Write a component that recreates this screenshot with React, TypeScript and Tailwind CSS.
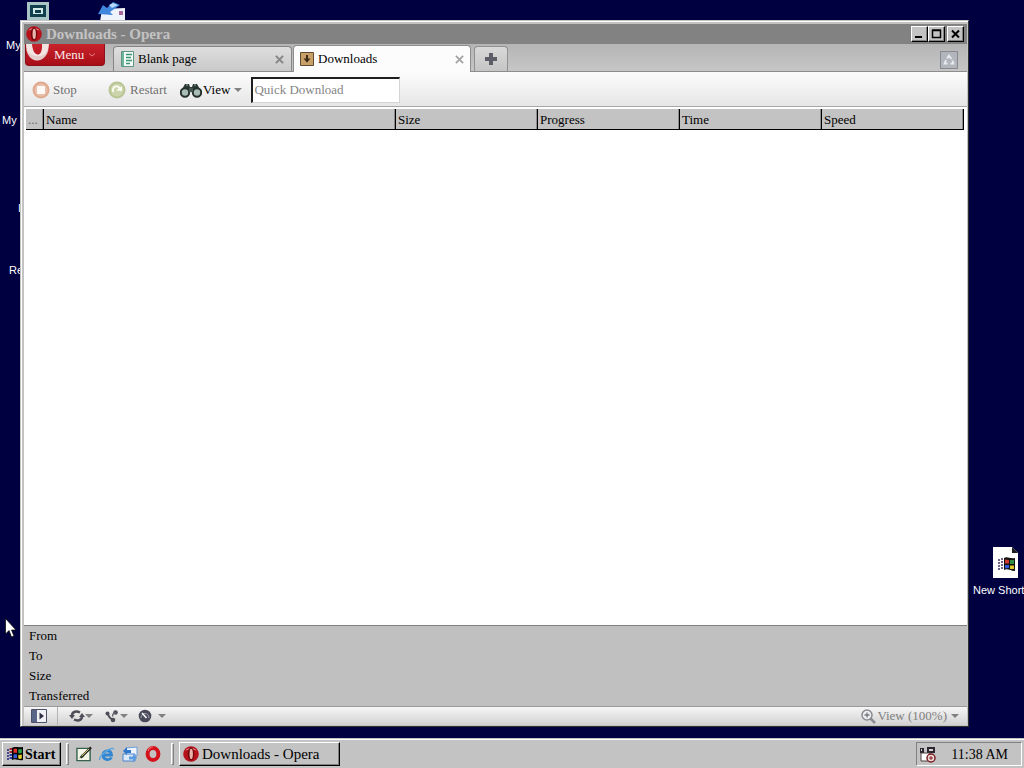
import React from 'react';

type IconProps = { className?: string };

const OperaIcon = ({ className = '' }: IconProps) => (
  <svg viewBox="0 0 16 16" className={className} aria-hidden="true">
    <ellipse cx="8" cy="8" rx="7.8" ry="7.8" fill="#b5121b" />
    <path d="M2 5C4 1 12 1 14 5C12 3 4 3 2 5Z" fill="#e8848a" />
    <ellipse cx="8" cy="8" rx="3.2" ry="6.4" fill="#6d050b" />
    <ellipse cx="8.2" cy="8" rx="1.7" ry="5.2" fill="#e9b4ab" />
  </svg>
);

const OperaRing = ({ className = '' }: IconProps) => (
  <svg viewBox="0 0 16 16" className={className} aria-hidden="true">
    <ellipse cx="8" cy="8" rx="5.4" ry="5.9" fill="none" stroke="#d3121b" strokeWidth="4" />
    <path d="M3 5C4 2 6 1 8 1" fill="none" stroke="#ef6a6a" strokeWidth="1.2" />
  </svg>
);

const WindowsFlag = ({ className = '' }: IconProps) => (
  <svg viewBox="0 0 18 16" className={className} aria-hidden="true">
    <path d="M6 2C9 0 11 2 17 1V14C12 15 10 12 6 14Z" fill="#000" />
    <path d="M7.5 3C9 2 10 2.5 11 3V7C10 6.5 9 6.5 7.5 7Z" fill="#e03028" />
    <path d="M12.3 3.3C13.5 3.5 14.5 3 15.8 3V7C14.5 7.5 13.5 7.5 12.3 7.3Z" fill="#2fa04a" />
    <path d="M7.5 8.5C9 8 10 8 11 8.5V12.3C10 11.8 9 12 7.5 12.5Z" fill="#3558d8" />
    <path d="M12.3 8.8C13.5 9 14.5 8.8 15.8 8.5V12.5C14.5 13 13.5 13 12.3 12.6Z" fill="#e8cf30" />
    <path d="M1 4h2M1 7h2M1 10h2M1 13h2" stroke="#26267a" strokeWidth="1.6" />
    <path d="M3.500 3H6M3.500 6H6" stroke="#a02830" strokeWidth="2" />
    <path d="M3.500 9H6M3.500 12H6" stroke="#2c3fa8" strokeWidth="2" />
  </svg>
);

const Caret = ({ className = '' }: IconProps) => (
  <svg viewBox="0 0 8 4" className={`h-1 w-2 shrink-0 ${className}`} aria-hidden="true">
    <path d="M0 0H8L4 4Z" fill="currentColor" />
  </svg>
);

const CloseIcon = ({ className = '' }: IconProps) => (
  <svg viewBox="0 0 10 10" className={className} aria-hidden="true">
    <path d="M1 1L9 9M9 1L1 9" stroke="currentColor" strokeWidth="2.2" />
  </svg>
);

const BinocularsIcon = () => (
  <svg viewBox="0 0 22 16" className="h-4 w-[22px]" aria-hidden="true">
    <path d="M5 2h4l1 3h2l1-3h4l4 7H1Z" fill="#2c3a35" />
    <path d="M6 3h2M14 3h2" stroke="#93a8a0" />
    <circle cx="5" cy="10.5" r="4.2" fill="#a9bcb5" stroke="#24312c" strokeWidth="2" />
    <circle cx="17" cy="10.5" r="4.2" fill="#a9bcb5" stroke="#24312c" strokeWidth="2" />
    <path d="M9 6h4v4h-4Z" fill="#46574f" />
  </svg>
);

const WINDOW_BUTTON =
  'flex h-4 w-[17px] items-center justify-center border border-t-white border-r-black border-b-black border-l-white bg-[#c3c3c3] shadow-[inset_-1px_-1px_0_#808080]';

function TitleBar() {
  return (
    <header className="flex h-5 items-center bg-[#828282] pr-[3px] pl-[2px]">
      <OperaIcon className="h-4 w-4" />
      <h1 className="ml-1 flex-1 text-[15px] leading-5 font-bold text-[#c3c3c3]">Downloads - Opera</h1>
      <button type="button" aria-label="Minimize" className={WINDOW_BUTTON}>
        <svg viewBox="0 0 11 10" className="h-[10px] w-[11px]">
          <path d="M1 8h7" stroke="#000" strokeWidth="2" />
        </svg>
      </button>
      <button type="button" aria-label="Maximize" className={WINDOW_BUTTON}>
        <svg viewBox="0 0 11 10" className="h-[10px] w-[11px]">
          <path d="M1.5 1.5h8v7h-8ZM1 1h9" fill="none" stroke="#000" strokeWidth="1.5" />
        </svg>
      </button>
      <button type="button" aria-label="Close" className={`ml-[2px] ${WINDOW_BUTTON}`}>
        <svg viewBox="0 0 11 10" className="h-[10px] w-[11px]">
          <path d="M2 1.5L9 8.5M9 1.5L2 8.5" stroke="#000" strokeWidth="2" />
        </svg>
      </button>
    </header>
  );
}

function TabBar() {
  return (
    <nav className="flex h-7 items-start border-b border-[#8d8d8d] bg-gradient-to-b from-[#b5b5b5] to-[#c6c6c6] pl-px">
      <button
        type="button"
        className="flex h-[22px] w-20 items-center rounded-b-sm border border-t-0 border-[#8c1118] bg-gradient-to-b from-[#c9222b] to-[#a80d17] text-[13px] text-[#fbe9e9]"
      >
        <svg viewBox="0 0 24 20" className="h-5 w-6 self-start" aria-hidden="true">
          <path d="M0 0C0 22 22 22 23 0H16C17 14 7 14 6 0Z" fill="#f3e3e1" />
          <path d="M0 4C2 20 21 20 23 4C20 15 4 15 0 4Z" fill="#d9c0be" opacity="0.6" />
        </svg>
        <span className="ml-1">Menu</span>
        <svg viewBox="0 0 8 4" className="ml-1 h-1 w-2" aria-hidden="true">
          <path d="M1 .5L4 3L7 .5" fill="none" stroke="#e88086" />
        </svg>
      </button>

      <div className="mt-[2px] ml-2 flex h-[25px] w-[179px] items-center rounded-t border border-b-0 border-[#858585] bg-gradient-to-b from-[#dedede] to-[#c9c9c9] px-[7px]">
        <button type="button" className="flex flex-1 items-center text-left text-[13px]">
          <svg viewBox="0 0 13 16" className="mr-1 h-4 w-[13px]" aria-hidden="true">
            <path d="M.5 .5h12v15H.5Z" fill="#f2fbf6" stroke="#5d9482" />
            <path d="M1 1h2v14H1Z" fill="#6fb49d" />
            <path d="M5 3.5h6M5 6.5h5M5 9.5h6M5 12.5h4" stroke="#3f9478" strokeWidth="1.5" />
          </svg>
          Blank page
        </button>
        <button type="button" aria-label="Close Blank page" className="text-[#858585]">
          <CloseIcon className="h-[9px] w-[9px]" />
        </button>
      </div>

      <div className="mt-px ml-px flex h-[27px] w-[178px] items-center rounded-t border border-b-0 border-[#8d8d8d] bg-[#fcfcfc] px-[6px]">
        <button type="button" className="flex flex-1 items-center text-left text-[13px]">
          <svg viewBox="0 0 14 14" className="mr-1 h-[14px] w-[14px]" aria-hidden="true">
            <path d="M.5 .5h13v13H.5Z" fill="#c9a067" stroke="#5e4b32" />
            <path d="M7 3v7" stroke="#3c2b18" strokeWidth="2" />
            <path d="M3.5 6.5h7L7 10.500Z" fill="#3c2b18" />
          </svg>
          Downloads
        </button>
        <button type="button" aria-label="Close Downloads" className="text-[#a6a6a6]">
          <CloseIcon className="h-[9px] w-[9px]" />
        </button>
      </div>

      <button
        type="button"
        aria-label="New tab"
        className="mt-[2px] ml-[3px] flex h-[25px] w-[34px] items-center justify-center rounded-t border border-b-0 border-[#919191] bg-gradient-to-b from-[#d9d9d9] to-[#c5c5c5]"
      >
        <svg viewBox="0 0 12 12" className="h-3 w-3" aria-hidden="true">
          <path d="M6 0v12M0 6h12" stroke="#5d5d68" strokeWidth="4" />
        </svg>
      </button>

      <button
        type="button"
        aria-label="Closed tabs"
        className="mt-[7px] mr-[9px] ml-auto flex h-[18px] w-[18px] items-center justify-center border border-[#858a91] bg-[#b2b6bc]"
      >
        <svg viewBox="0 0 14 14" className="h-[14px] w-[14px]" aria-hidden="true">
          <path d="M5 5.5L7 2.5L9.5 6M10.500 7.500L11.500 10.500H8.500M5.500 10.500H2.500L4 7" fill="none" stroke="#e7eaee" strokeWidth="1.800" />
        </svg>
      </button>
    </nav>
  );
}

function Toolbar() {
  return (
    <div className="flex h-[35px] items-center border-b border-[#a8a8a8] bg-gradient-to-b from-[#fcfcfc] to-[#e6e6e6] pt-px pl-2 text-[13px] text-[#717171]">
      <button type="button" className="flex w-[76px] items-center">
        <svg viewBox="0 0 18 18" className="mr-[3px] h-[18px] w-[18px]" aria-hidden="true">
          <circle cx="9" cy="9" r="8.5" fill="#dfa98f" />
          <circle cx="9" cy="9" r="6.5" fill="#e9bfaa" />
          <rect x="5" y="5" width="8" height="8" rx="1" fill="#fff9f5" />
        </svg>
        Stop
      </button>
      <button type="button" className="flex w-[72px] items-center">
        <svg viewBox="0 0 18 18" className="mr-1 h-[18px] w-[18px]" aria-hidden="true">
          <circle cx="9" cy="9" r="8.5" fill="#b9c495" />
          <circle cx="9" cy="9" r="6.5" fill="#cbd5ab" />
          <path d="M5 11C4 4 11 4 12 8" fill="none" stroke="#fbfdf4" strokeWidth="2" />
          <path d="M8 9.500L14 10V5Z" fill="#fbfdf4" />
        </svg>
        Restart
      </button>
      <button type="button" className="flex items-center text-black">
        <BinocularsIcon />
        <span className="mr-1 ml-px">View</span>
        <Caret className="text-[#828282]" />
      </button>
      <input
        type="text"
        aria-label="Quick Download"
        placeholder="Quick Download"
        className="ml-[9px] h-[26px] w-[149px] border-t-2 border-r border-b border-l-2 border-t-[#1e1e1e] border-r-[#d4d4d4] border-b-[#d4d4d4] border-l-[#1e1e1e] bg-white px-px text-[13px] outline-none placeholder:text-[#858585]"
      />
    </div>
  );
}

// Name takes whatever the fixed columns leave
const COLUMNS = [
  { label: '...', width: 'w-[18px] text-[#6a6a6a]' },
  { label: 'Name', width: '' },
  { label: 'Size', width: 'w-[142px]' },
  { label: 'Progress', width: 'w-[142px]' },
  { label: 'Time', width: 'w-[142px]' },
  { label: 'Speed', width: 'w-[142px]' },
];

function TransferList() {
  return (
    <main className="flex-1 bg-white pt-[2px] pr-[3px] pl-[2px]">
      <table className="w-full table-fixed border-separate border-spacing-0 text-[13px]">
        <thead>
          <tr className="bg-[#c3c3c3]">
            {COLUMNS.map((column) => (
              <th
                key={column.label}
                scope="col"
                className={`overflow-hidden border-r border-b border-r-black border-b-black p-0 pt-px pl-[2px] text-left leading-[19px] font-normal shadow-[inset_-1px_0_0_#8c8c8c] ${column.width}`}
              >
                {column.label}
              </th>
            ))}
          </tr>
        </thead>
        <tbody />
      </table>
    </main>
  );
}

const DETAILS = ['From', 'To', 'Size', 'Transferred'];

function StatusBar() {
  return (
    <footer className="flex h-[19px] items-center border-t border-[#9a9a9a] bg-gradient-to-b from-[#f6f6f6] to-[#d2d2d2] text-[#808080]">
      <button type="button" aria-label="Panels" className="flex h-full w-[34px] items-center border-r border-[#b4b4b4] pl-[7px]">
        <svg viewBox="0 0 16 14" className="h-[14px] w-4" aria-hidden="true">
          <path d="M.5 .5h15v13H.5Z" fill="#f1f1f5" stroke="#4c5068" />
          <path d="M1 1h5v12H1Z" fill="#5b6588" />
          <path d="M8.5 3.5L13 7L8.5 10.5Z" fill="#2d3044" />
        </svg>
      </button>
      <button type="button" aria-label="Synchronize" className="ml-[11px] flex items-center">
        <svg viewBox="0 0 16 12" className="h-3 w-4" aria-hidden="true">
          <path d="M3 6C3 1 8 1 11 2.500M13 6C13 11 8 11 5 9.500" fill="none" stroke="#4e4e58" strokeWidth="2.5" />
          <path d="M0 5h6L3 9ZM10 7h6L13 3Z" fill="#4e4e58" />
        </svg>
        <Caret />
      </button>
      <button type="button" aria-label="Unite" className="ml-3 flex items-center gap-px">
        <svg viewBox="0 0 14 14" className="h-[14px] w-[14px]" aria-hidden="true">
          <circle cx="2.5" cy="4.5" r="2" fill="#4e4e58" />
          <circle cx="10.5" cy="3.5" r="2.3" fill="#4e4e58" />
          <circle cx="8" cy="11" r="2.3" fill="#4e4e58" />
          <path d="M3 4.5C3 8 5 9 8 11" fill="none" stroke="#4e4e58" strokeWidth="2" />
          <path d="M10.500 4C8 4 7 6 8 7.500" fill="none" stroke="#6b6b75" strokeWidth="1.500" />
        </svg>
        <Caret />
      </button>
      <button type="button" aria-label="Turbo" className="ml-[10px] flex items-center gap-[6px]">
        <svg viewBox="0 0 14 14" className="h-[14px] w-[14px]" aria-hidden="true">
          <circle cx="7" cy="7" r="6.3" fill="#484a58" />
          <path d="M3 9C3 3 11 3 11 9" fill="none" stroke="#9ea2b2" />
          <path d="M8.500 9L4 4" stroke="#fff" strokeWidth="1.5" />
        </svg>
        <Caret />
      </button>
      <button type="button" className="mr-2 ml-auto flex items-center text-[13px]">
        <svg viewBox="0 0 15 15" className="mr-px h-[15px] w-[15px]" aria-hidden="true">
          <circle cx="6" cy="6" r="5" fill="#eeeef2" stroke="#8a8a93" strokeWidth="1.5" />
          <path d="M3.5 6h5M6 3.5v5" stroke="#777780" strokeWidth="1.3" />
          <path d="M9.5 9.5L14 14" stroke="#8a8a93" strokeWidth="2.5" />
        </svg>
        View (100%)
        <Caret className="ml-1" />
      </button>
    </footer>
  );
}

function DownloadsWindow() {
  return (
    <section className="relative mt-5 mr-[55px] mb-[11px] ml-5 flex flex-1 flex-col border border-t-[#c3c3c3] border-r-[#303030] border-b-[#303030] border-l-[#c3c3c3] bg-[#c3c3c3] pt-[3px] pr-px pb-px pl-[3px] shadow-[inset_1px_1px_0_#fff]">
      <TitleBar />
      <TabBar />
      <Toolbar />
      <TransferList />
      <ul className="border-t border-[#808080] bg-[#c0c0c0] pl-[5px] text-[13px] leading-5">
        {DETAILS.map((label) => (
          <li key={label}>{label}</li>
        ))}
      </ul>
      <StatusBar />
    </section>
  );
}

function DesktopIcons() {
  return (
    <div className="font-['Liberation_Sans',sans-serif] text-[11px] leading-[14px] text-white">
      <svg viewBox="0 0 24 22" className="absolute top-[2px] left-[27px] h-[22px] w-6" aria-hidden="true">
        <path d="M0 0h22v22H0Z" fill="#a9c4c4" />
        <path d="M3 3h16v12H3Z" fill="#113f4d" />
        <path d="M6 6h10v6H6Z" fill="#d5ebe8" />
        <path d="M8 8h6v3H8Z" fill="#113f4d" />
      </svg>
      <svg viewBox="0 0 28 20" className="absolute top-[2px] left-[98px] h-5 w-7" aria-hidden="true">
        <path d="M4 7L27 6V20H2Z" fill="#eef3fb" />
        <path d="M0 12L5 3L9 6L15 0L22 3L12 10L15 13Z" fill="#3f86dc" />
        <path d="M11 3L15 1L20 3L14 6Z" fill="#b9d8f8" />
        <path d="M21 9h4v4h-4Z" fill="#a9699a" />
      </svg>
      <span className="absolute top-[38px] left-[6px]">My</span>
      <span className="absolute top-[113px] left-[2px]">My</span>
      <span className="absolute top-[201px] left-[18px]">I</span>
      <span className="absolute top-[263px] left-[9px]">Re</span>
      <div className="absolute top-[547px] left-[973px] whitespace-nowrap">
        <svg viewBox="0 0 26 31" className="ml-5 h-[31px] w-[26px]" aria-hidden="true">
          <path d="M0 0H19L25 6V31H0Z" fill="#fff" />
          <path d="M19 0V6H25Z" fill="#1c1c1c" />
          <path d="M11 11C14 9 17 12 22 11V24C17 24 15 21 11 23Z" fill="#111" />
          <path d="M12 12.5L16 13V16.5L12 16.5Z" fill="#d2372f" />
          <path d="M17 13L21 13V17L17 17Z" fill="#2f8c45" />
          <path d="M12 18L16 18V21L12 21.5Z" fill="#3558d8" />
          <path d="M17 18.5L21 18.5V22L17 22Z" fill="#dfc72f" />
          <path d="M5 13h2M8 12h2M5 16h2M8 15h2M5 19h2M8 18h2M5 22h2M8 21h2" stroke="#403060" strokeWidth="1.5" />
        </svg>
        <span className="mt-[5px] block">New Short</span>
      </div>
      <svg viewBox="0 0 12 20" className="absolute top-[618px] left-[5px] h-5 w-3" aria-hidden="true">
        <path d="M.5 .5V16L4 12.5L6.5 19L9 18L6.5 12H11Z" fill="#fff" stroke="#000" strokeWidth=".7" />
      </svg>
    </div>
  );
}

const Grip = () => <span className="h-[22px] w-[3px] border border-t-white border-r-[#808080] border-b-[#808080] border-l-white" />;

const TASK_BUTTON =
  'flex h-6 items-center border border-t-white border-r-black border-b-black border-l-white shadow-[inset_-1px_-1px_0_#808080]';

function Taskbar() {
  return (
    <div className="flex h-[30px] items-center border-t border-[#c3c3c3] bg-[#c3c3c3] px-[2px] pt-px shadow-[inset_0_1px_0_#fff]">
      <button type="button" className={`w-[59px] gap-px pl-[3px] text-[14px] font-bold ${TASK_BUTTON}`}>
        <WindowsFlag className="h-4 w-[18px] shrink-0" />
        Start
      </button>
      <div className="ml-[5px] flex items-center gap-[7px]">
        <Grip />
        <button type="button" aria-label="Show Desktop" className="h-4 w-4">
          <svg viewBox="0 0 17 16" className="h-4 w-4">
            <path d="M1 2h14v13H1Z" fill="#f4f6e8" stroke="#35624e" strokeWidth="1.5" />
            <path d="M3 13L6 8L9 11Z" fill="#8fb98d" />
            <path d="M5 12L16 1" stroke="#222" strokeWidth="2.500" />
            <path d="M6 10.500L14 2.500" stroke="#d9d06a" />
          </svg>
        </button>
        <button type="button" aria-label="Internet Explorer" className="h-4 w-4">
          <svg viewBox="0 0 16 16" className="h-4 w-4">
            <path d="M12.5 11.5C10 15 4 14 4 9C4 4 12 3 12.5 9H5" fill="none" stroke="#2f86d2" strokeWidth="2.8" />
            <path d="M1 14C-1 11 11 0 15 3" fill="none" stroke="#5ea6e0" strokeWidth="1.5" />
          </svg>
        </button>
        <button type="button" aria-label="Outlook Express" className="h-4 w-4">
          <svg viewBox="0 0 16 16" className="h-4 w-4">
            <path d="M4 2L15 1V10L5 11Z" fill="#eef4fc" stroke="#6f9cd6" />
            <path d="M1 8L13 8V15H1Z" fill="#dbe8f8" stroke="#4a82ca" />
            <path d="M1 5L5 1V4H9V7H5V9Z" fill="#2f77cc" />
            <path d="M15 12L11 8V10.500H7V13.500H11V16Z" fill="#5b9be0" />
          </svg>
        </button>
        <button type="button" aria-label="Opera" className="h-4 w-4">
          <OperaRing className="h-4 w-4" />
        </button>
      </div>
      <div className="ml-[10px] flex items-center gap-[5px]">
        <Grip />
        <button type="button" className={`w-[161px] gap-[3px] pl-[3px] text-[15px] ${TASK_BUTTON}`}>
          <OperaIcon className="h-4 w-4" />
          Downloads - Opera
        </button>
      </div>
      <div className="ml-auto flex h-6 w-[106px] items-center justify-between border border-t-[#808080] border-r-white border-b-white border-l-[#808080] pr-[13px] pl-[2px] text-[14px]">
        <svg viewBox="0 0 17 17" className="h-[17px] w-[17px]" aria-hidden="true">
          <path d="M1 2h4v5H1ZM8 1h8v6H8Z" fill="#2b2530" />
          <path d="M2 3h1v2H2ZM10 3h4v2h-4Z" fill="#d8d2d6" />
          <path d="M2 7h9v8H2Z" fill="#fff" stroke="#4c4040" />
          <circle cx="12" cy="12" r="4" fill="#f3dcd9" stroke="#7a1f24" strokeWidth="1.5" />
          <path d="M12 10v4M10 12h4" stroke="#7a1f24" />
        </svg>
        <time>11:38 AM</time>
      </div>
    </div>
  );
}

export default function App() {
  return (
    <div className="flex min-h-screen flex-col overflow-hidden bg-[#c3c3c3] font-['Liberation_Serif',serif] text-black">
      <div className="relative flex flex-1 flex-col overflow-hidden bg-[#000040]">
        <DesktopIcons />
        <DownloadsWindow />
      </div>
      <Taskbar />
    </div>
  );
}
